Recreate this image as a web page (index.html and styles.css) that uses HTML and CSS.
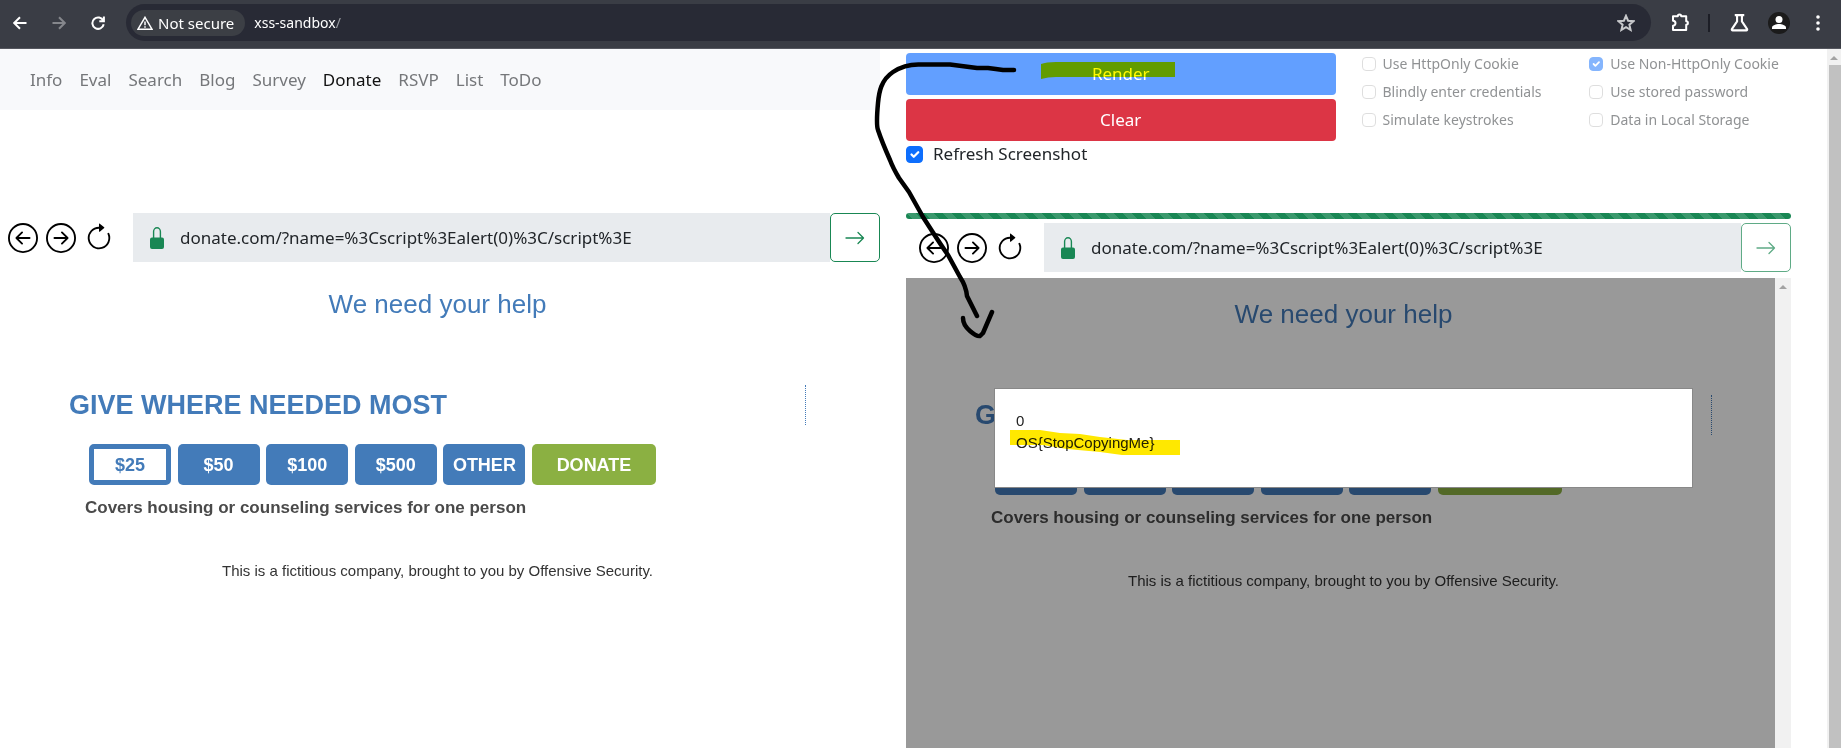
FILE: index.html
```html
<!DOCTYPE html>
<html lang="en">
<head>
<meta charset="utf-8">
<title>xss-sandbox</title>
<link rel="stylesheet" href="styles.css">
</head>
<body>
<svg class="defs" aria-hidden="true">
  <symbol id="circle-left" viewBox="0 0 16 16"><path fill-rule="evenodd" d="M1 8a7 7 0 1 0 14 0A7 7 0 0 0 1 8m15 0A8 8 0 1 1 0 8a8 8 0 0 1 16 0m-4.500-.5a.5.5 0 0 1 0 1H5.707l2.147 2.146a.5.5 0 0 1-.708.708l-3-3a.5.5 0 0 1 0-.708l3-3a.5.5 0 1 1 .708.708L5.707 7.500z"/></symbol>
  <symbol id="circle-right" viewBox="0 0 16 16"><path fill-rule="evenodd" d="M1 8a7 7 0 1 0 14 0A7 7 0 0 0 1 8m15 0A8 8 0 1 1 0 8a8 8 0 0 1 16 0M4.500 7.500a.5.5 0 0 0 0 1h5.793l-2.147 2.146a.5.5 0 0 0 .708.708l3-3a.5.5 0 0 0 0-.708l-3-3a.5.5 0 1 0-.708.708L10.293 7.500z"/></symbol>
  <symbol id="reload" viewBox="0 0 16 16"><path fill-rule="evenodd" d="M8 3a5 5 0 1 0 4.546 2.914.5.5 0 0 1 .908-.417A6 6 0 1 1 8 2z"/><path d="M8 4.466V.534a.25.25 0 0 1 .41-.192l2.360 1.966c.12.1.12.284 0 .384L8.410 4.658A.25.25 0 0 1 8 4.466"/></symbol>
  <symbol id="lock" viewBox="0 0 14 22"><path d="M2 10.500h10a2 2 0 0 1 2 2V20a2 2 0 0 1-2 2H2a2 2 0 0 1-2-2v-7.500a2 2 0 0 1 2-2z"/><path d="M3.600 11V4.500a3.400 3.700 0 0 1 6.800 0V11" fill="none" stroke="currentColor" stroke-width="1.400"/></symbol>
  <symbol id="arrow" viewBox="0 0 20 14"><path d="M1 7h17.500M13 1.500 18.500 7 13 12.500" fill="none" stroke="currentColor" stroke-width="1.300" stroke-linecap="round" stroke-linejoin="round"/></symbol>
</svg>

<header class="toolbar">
  <div class="toolbar-nav">
    <button class="tool" aria-label="Back"><svg viewBox="0 0 14 14"><path d="M13.500 7H1.500M7 1.200 1.200 7 7 12.800" /></svg></button>
    <button class="tool dim" aria-label="Forward"><svg viewBox="0 0 14 14"><path d="M.5 7h12M7 1.200 12.800 7 7 12.800"/></svg></button>
    <button class="tool" aria-label="Reload"><svg viewBox="0 0 14 14"><path d="M12.300 4.800A5.700 5.700 0 1 0 12.700 8.200M12.900.6v4.600H8.300"/></svg></button>
  </div>
  <div class="omnibox">
    <button class="chip"><svg viewBox="0 0 16 14"><path d="M8 1.300 15 13.200H1z" stroke-width="1.500"/><path d="M8 5.500v3.700M8 10.200v1.500" stroke-width="1.500"/></svg>Not secure</button>
    <div class="url"><input type="text" aria-label="Address" value="xss-sandbox"><span>/</span></div>
    <button class="tool star" aria-label="Bookmark"><svg viewBox="0 0 18 18"><path d="M9 1.800l2.100 4.900 5.300.5-4 3.500 1.200 5.200L9 13.100l-4.600 2.800 1.200-5.200-4-3.500 5.300-.5z"/></svg></button>
  </div>
  <div class="toolbar-end">
    <button class="tool big" aria-label="Extensions"><svg viewBox="0 0 19 19"><path d="M2 3.300h4.800a1.700 1.700 0 0 1 3.400 0H15.200V8.300a1.700 1.700 0 0 1 0 3.400v5.300H2v-4.200a2.500 2.500 0 0 0 0-5z" stroke-linejoin="round"/></svg></button>
    <span class="divider"></span>
    <button class="tool big" aria-label="Experiments"><svg viewBox="0 0 18 18"><path d="M4.500 2h9M6.700 2v6L1.800 15.300a.8.8 0 0 0 .7 1.200h13a.8.8 0 0 0 .7-1.200L11.300 8V2"/></svg></button>
    <button class="avatar" aria-label="Profile"><svg viewBox="0 0 22 22"><circle cx="11" cy="7.500" r="3.500"/><path d="M4 17v-1.500c0-2.300 4.300-3.500 7-3.500s7 1.200 7 3.500V17z"/></svg></button>
    <button class="tool menu" aria-label="Menu"><svg viewBox="0 0 4 16"><circle cx="2" cy="2" r="1.800"/><circle cx="2" cy="8" r="1.800"/><circle cx="2" cy="14" r="1.800"/></svg></button>
  </div>
</header>

<div class="viewport">
  <main class="columns">
    <section class="pane">
      <nav class="site-nav">
        <a href="#">Info</a><a href="#">Eval</a><a href="#">Search</a><a href="#">Blog</a><a href="#">Survey</a><a href="#" class="active">Donate</a><a href="#">RSVP</a><a href="#">List</a><a href="#">ToDo</a>
      </nav>
      <div class="browser">
        <div class="browser-bar">
          <div class="browser-nav">
            <button aria-label="Back"><svg><use href="#circle-left"/></svg></button>
            <button aria-label="Forward"><svg><use href="#circle-right"/></svg></button>
            <button aria-label="Reload"><svg><use href="#reload"/></svg></button>
          </div>
          <div class="location">
            <svg class="lock"><use href="#lock"/></svg>
            <input type="text" aria-label="Page URL" value="donate.com/?name=%3Cscript%3Ealert(0)%3C/script%3E">
          </div>
          <button class="go" aria-label="Go"><svg><use href="#arrow"/></svg></button>
        </div>
        <div class="frame">
          <div class="donate">
            <h1>We need your help</h1>
            <div class="give"><h2>GIVE WHERE NEEDED MOST</h2><span class="dots"></span></div>
            <div class="amounts">
              <button class="selected">$25</button><button>$50</button><button>$100</button><button>$500</button><button>OTHER</button><button class="submit">DONATE</button>
            </div>
            <p class="covers">Covers housing or counseling services for one person</p>
            <p class="footer">This is a fictitious company, brought to you by Offensive Security.</p>
          </div>
        </div>
      </div>
    </section>

    <section class="pane">
      <div class="controls">
        <div class="actions">
          <button class="render">Render</button>
          <button class="clear">Clear</button>
          <label class="check"><input type="checkbox" checked>Refresh Screenshot</label>
        </div>
        <div class="options">
          <label class="check"><input type="checkbox" disabled>Use HttpOnly Cookie</label>
          <label class="check"><input type="checkbox" disabled checked>Use Non-HttpOnly Cookie</label>
          <label class="check"><input type="checkbox" disabled>Blindly enter credentials</label>
          <label class="check"><input type="checkbox" disabled>Use stored password</label>
          <label class="check"><input type="checkbox" disabled>Simulate keystrokes</label>
          <label class="check"><input type="checkbox" disabled>Data in Local Storage</label>
        </div>
      </div>
      <div class="browser">
        <div class="progress"></div>
        <div class="browser-bar inset">
          <div class="browser-nav">
            <button aria-label="Back"><svg><use href="#circle-left"/></svg></button>
            <button aria-label="Forward"><svg><use href="#circle-right"/></svg></button>
            <button aria-label="Reload"><svg><use href="#reload"/></svg></button>
          </div>
          <div class="location">
            <svg class="lock"><use href="#lock"/></svg>
            <input type="text" aria-label="Rendered URL" value="donate.com/?name=%3Cscript%3Ealert(0)%3C/script%3E">
          </div>
          <button class="go faded" aria-label="Go"><svg><use href="#arrow"/></svg></button>
        </div>
        <div class="frame shot">
          <div class="donate">
            <h1>We need your help</h1>
            <div class="give"><h2>GIVE WHERE NEEDED MOST</h2><span class="dots"></span></div>
            <div class="amounts">
              <button>$25</button><button>$50</button><button>$100</button><button>$500</button><button>OTHER</button><button class="submit">DONATE</button>
            </div>
            <p class="covers">Covers housing or counseling services for one person</p>
            <p class="footer">This is a fictitious company, brought to you by Offensive Security.</p>
            <div class="shade"><div class="alert" role="dialog" aria-label="Alert"><p>0</p><p>OS{StopCopyingMe}</p></div></div>
          </div>
          <div class="scrollbar"><span class="up"></span></div>
        </div>
      </div>
    </section>
  </main>
  <div class="scrollbar page-scroll"><span class="up"></span><span class="thumb"></span></div>
</div>

<svg class="marks" viewBox="0 0 1841 748" aria-hidden="true">
  <path d="M1041 64Q1046 62 1056 62H1175V77H1056Q1048 77 1041 79Z" fill="#fffa00"/>
  <path d="M1010 430H1040L1060 433 1080 434 1100 437 1127 440H1180V455H1122L1100 452 1067 449 1043 445H1010Z" fill="#ffe800"/>
  <path d="M1014 70H1003Q996 69 988 68L977 68Q962 66 950 64.500L920 64.500Q905 64 893 72C881 80 879 92 878 103Q876 125 878 130C880 136 886 151 890 160Q893 168 899 178L909 192 923 217 932 231Q941 245 948 255L960 277Q966 286 967 296L977 316M963 318Q963 325 970 331 977 337 980 336L983 333 992 312" fill="none" stroke="#000" stroke-width="4.500" stroke-linecap="round" stroke-linejoin="round"/>
</svg>
</body>
</html>
```
FILE: styles.css
```css
* { box-sizing: border-box; }
html, body { height: 100%; }
body {
  margin: 0;
  display: flex;
  flex-direction: column;
  overflow: hidden;
  position: relative;
  background: #fff;
  color: #212529;
  font: 17px/26px "Noto Sans", sans-serif;
}
button, input { font: inherit; color: inherit; margin: 0; }
button { padding: 0; border: 0; background: none; }
h1, h2, p { margin: 0; }
.defs { position: absolute; width: 0; height: 0; }

/* Browser toolbar */
.toolbar {
  flex: none;
  display: flex;
  align-items: center;
  height: 49px;
  padding: 0 21px 3px 13px;
  background: #3a3d45;
  border-bottom: 1px solid #55575f;
  color: #fff;
  font-size: 15px;
}
.toolbar-nav { display: flex; gap: 25px; }
.toolbar svg { display: block; fill: none; stroke: currentColor; stroke-width: 2; }
.tool svg { width: 14px; height: 14px; }
.tool.dim { color: #85878c; }
.omnibox {
  flex: 1;
  display: flex;
  align-items: center;
  height: 37px;
  margin-left: 21px;
  padding: 0 16px 0 5px;
  border-radius: 19px;
  background: #282a35;
}
.chip {
  display: flex;
  align-items: center;
  gap: 5px;
  height: 26px;
  padding: 0 11px 0 6px;
  border-radius: 13px;
  background: #3c3f45;
}
.chip svg { width: 16px; height: 14px; }
.url { flex: 1; display: flex; margin-left: 9px; font-size: 14px; }
.url input { field-sizing: content; border: 0; padding: 0; background: none; outline: 0; }
.url span { color: #9a9ca2; }
.star { color: #c8c9cc; }
.tool.star svg { width: 18px; height: 18px; }
.toolbar-end { display: flex; align-items: center; margin-left: 20px; }
.tool.big svg { width: 19px; height: 19px; }
.divider { width: 2px; height: 18px; margin: 0 20px 0 18px; background: #1c1e26; }
.avatar { width: 22px; height: 22px; margin: 0 26px 0 19px; border-radius: 50%; background: #1b1b1b; }
.avatar svg, .toolbar .menu svg { fill: #fff; stroke: none; }
.tool.menu svg { width: 4px; height: 16px; }

/* Page */
.viewport { flex: 1; min-height: 0; display: flex; }
.columns {
  flex: 1;
  display: grid;
  grid-template-columns: 176fr 177fr;
  gap: 26px;
  padding-right: 36px;
}
.pane {
  min-width: 0;
  min-height: 0;
  display: grid;
  grid-template-rows: 164px 1fr;
}
.site-nav {
  align-self: start;
  display: flex;
  gap: 17px;
  padding: 18px 30px 17px;
  background: #f8f9fb;
}
.site-nav a { color: #75777a; text-decoration: none; }
.site-nav .active { color: #111; }

.controls { display: grid; grid-template-columns: 1fr 1fr; gap: 26px; align-items: start; padding-top: 4px; }
.actions { display: grid; gap: 4px; }
.render, .clear { height: 42px; border-radius: 4px; color: #fff; }
.render { background: #629fff; }
.clear { background: #dc3545; }
.check { display: flex; align-items: center; gap: 10px; }
.actions .check { line-height: 18px; }
.check input {
  appearance: none;
  flex: none;
  width: 17px;
  height: 17px;
  border: 1px solid #bfbfbf;
  border-radius: 4px;
  background: #fff;
}
.check input:checked {
  border-color: #0d6efd;
  background: #0d6efd url("data:image/svg+xml,%3Csvg xmlns='http://www.w3.org/2000/svg' viewBox='0 0 20 20'%3E%3Cpath fill='none' stroke='%23fff' stroke-linecap='round' stroke-linejoin='round' stroke-width='3' d='m6 10 3 3 6-6'/%3E%3C/svg%3E") center / contain;
}
.options { display: grid; grid-template-columns: 1fr 1fr; column-gap: 26px; row-gap: 6px; font-size: 14px; line-height: 22px; color: #909294; }
.options .check { gap: 7px; white-space: nowrap; }
.options input { width: 14px; height: 14px; opacity: .5; }

/* Simulated browser */
.browser { min-height: 0; display: flex; flex-direction: column; }
.browser-bar { display: flex; align-items: center; height: 49px; padding-left: 8px; }
.browser-bar.inset { padding-left: 13px; }
.progress {
  height: 6px;
  margin-bottom: 4px;
  border-radius: 3px;
  background: #198754 linear-gradient(45deg, rgba(255,255,255,.15) 25%, transparent 25%, transparent 50%, rgba(255,255,255,.15) 50%, rgba(255,255,255,.15) 75%, transparent 75%) 0 0 / 18px 18px;
}
.browser-nav { display: flex; gap: 8px; margin-right: 19px; }
.browser-nav svg { display: block; width: 30px; height: 30px; }
.location { flex: 1; display: flex; align-items: center; gap: 16px; height: 49px; padding-left: 17px; background: #e8ebee; }
.lock { flex: none; width: 14px; height: 22px; color: #198754; fill: #198754; }
.location input { flex: 1; min-width: 0; border: 0; padding: 0; background: none; outline: 0; }
.go { display: grid; place-items: center; width: 50px; height: 49px; border: 1px solid #198754; border-radius: 5px; background: #fff; color: #198754; }
.go svg { width: 20px; height: 14px; }
.go.faded { border-color: #5fab86; color: #5fab86; }
.frame { flex: 1; min-height: 0; display: flex; margin-top: 6px; }
.donate {
  flex: 1;
  position: relative;
  overflow: hidden;
  padding: 21px 74px 0 69px;
  font-family: "Liberation Sans", Arial, sans-serif;
}
.shot .donate { padding-right: 63px; }
.donate h1 { font-size: 26px; line-height: 30px; font-weight: 400; text-align: center; color: #437bb9; }
.give { display: flex; justify-content: space-between; margin-top: 66px; }
.give h2 { font-size: 27px; line-height: 40px; color: #437bb9; }
.dots { height: 40px; border-left: 1px dotted #437bb9; }
.amounts { display: flex; justify-content: space-between; max-width: 587px; margin-top: 19px; padding-left: 20px; }
.amounts button { width: 82px; height: 41px; border-radius: 5px; background: #437bb9; color: #fff; font-size: 18px; font-weight: 700; }
.amounts .selected { background: #fff; color: #437bb9; border: 5px solid #437bb9; }
.amounts .submit { width: 124px; background: #8bb042; }
.covers { margin-top: 13px; padding-left: 16px; font-size: 17px; line-height: 20px; font-weight: 700; color: #4a4a4a; }
.footer { margin-top: 43px; font-size: 15px; line-height: 20px; text-align: center; color: #333; }
.shade { position: absolute; inset: 0; padding: 110px 82px 0 88px; background: rgba(0, 0, 0, .4); }
.alert { height: 100px; padding: 21px; border: 1px solid #888; background: #fff; font-size: 15px; line-height: 22px; color: #222; }

.scrollbar { flex: none; width: 16px; padding-top: 7px; background: #f1f1f1; }
.up { display: block; width: 0; margin: 0 auto; border: 4px solid transparent; border-top: 0; border-bottom-color: #a3a3a3; }
.page-scroll { width: 14px; display: flex; flex-direction: column; }
.thumb { flex: 1; margin: 5px 0 0 2px; background: #c1c1c1; }

/* Hand-drawn annotations */
.marks { position: absolute; top: 0; left: 0; width: 1841px; height: 748px; pointer-events: none; mix-blend-mode: multiply; }
```
